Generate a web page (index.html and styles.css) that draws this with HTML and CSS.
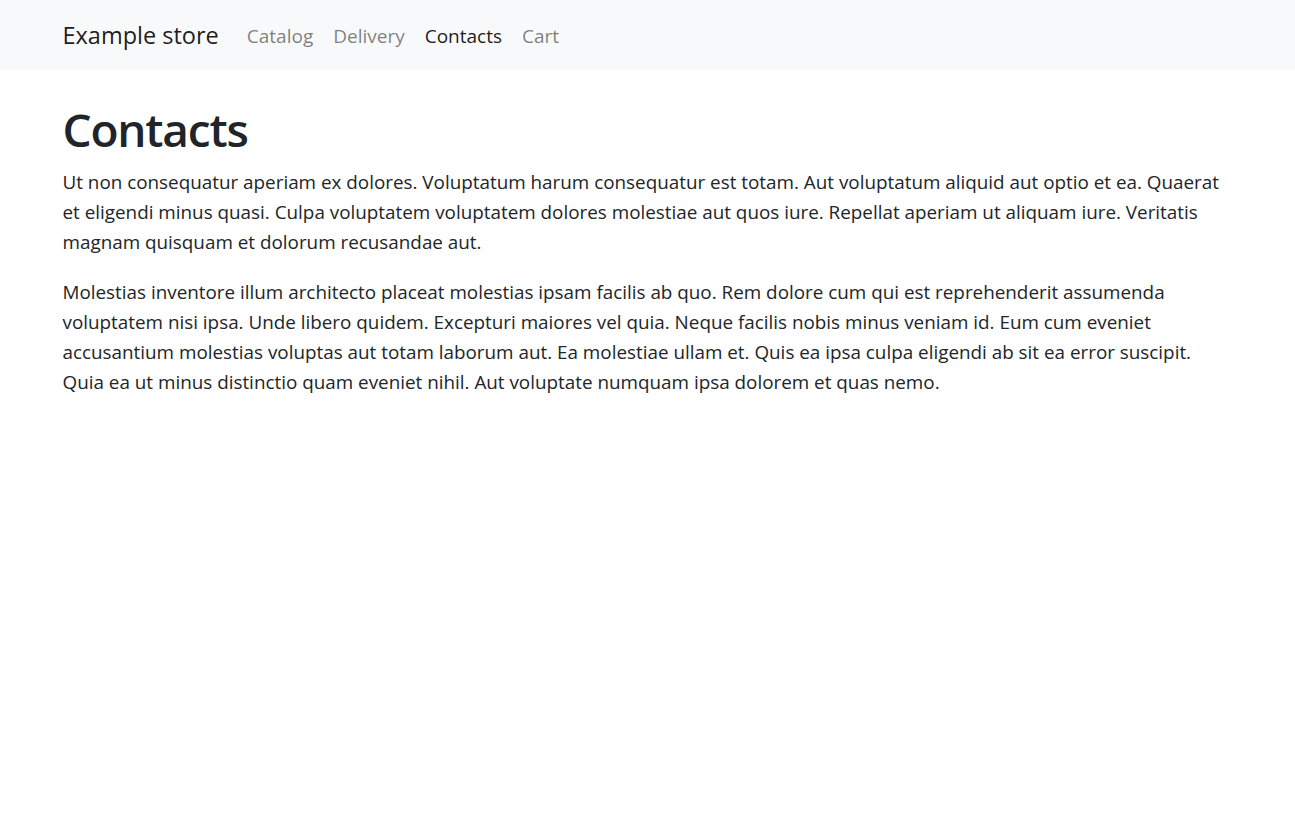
FILE: index.html
```html
<!DOCTYPE html>
<html lang="en">
<head>
<meta charset="utf-8">
<title>Contacts</title>
<link rel="stylesheet" href="styles.css">
</head>
<body>
<nav class="navbar">
  <div class="container nav-inner">
    <a class="brand" href="#">Example store</a>
    <ul class="nav">
      <li><a class="nav-link" href="#">Catalog</a></li>
      <li><a class="nav-link" href="#">Delivery</a></li>
      <li><a class="nav-link active" href="#">Contacts</a></li>
      <li><a class="nav-link" href="#">Cart</a></li>
    </ul>
  </div>
</nav>
<main class="container content">
  <h1 class="title">Contacts</h1>
  <p>Ut non consequatur aperiam ex dolores. Voluptatum harum consequatur est totam. Aut voluptatum aliquid aut optio et ea. Quaerat et eligendi minus quasi. Culpa voluptatem voluptatem dolores molestiae aut quos iure. Repellat aperiam ut aliquam iure. Veritatis magnam quisquam et dolorum recusandae aut.</p>
  <p>Molestias inventore illum architecto placeat molestias ipsam facilis ab quo. Rem dolore cum qui est reprehenderit assumenda voluptatem nisi ipsa. Unde libero quidem. Excepturi maiores vel quia. Neque facilis nobis minus veniam id. Eum cum eveniet accusantium molestias voluptas aut totam laborum aut. Ea molestiae ullam et. Quis ea ipsa culpa eligendi ab sit ea error suscipit. Quia ea ut minus distinctio quam eveniet nihil. Aut voluptate numquam ipsa dolorem et quas nemo.</p>
</main>
</body>
</html>
```
FILE: styles.css
```css
html { font-size: 20px; }
* { box-sizing: border-box; }
body {
  margin: 0;
  font-family: "Open Sans", "Noto Sans", sans-serif;
  font-size: 18.85px;
  line-height: 30px;
  color: #212529;
  background: #fff;
}
.container {
  width: 100%;
  max-width: 1200px;
  margin: 0 auto;
  padding: 0 15px;
}
.navbar {
  background: #f8f9fa;
  padding: 10px 0;
}
.nav-inner {
  display: flex;
  align-items: center;
}
.brand {
  font-size: 23.5px;
  line-height: 37px;
  padding: 6px 0 5px;
  margin-right: 18px;
  color: rgba(0,0,0,.9);
  text-decoration: none;
  white-space: nowrap;
}
.nav {
  display: flex;
  list-style: none;
  margin: 0;
  padding: 0;
}
.nav-link {
  display: block;
  padding: 11px 10px 9px;
  line-height: 30px;
  font-size: 19px;
  color: rgba(0,0,0,.5);
  text-decoration: none;
}
.nav-link.active { color: rgba(0,0,0,.9); }
.content { padding-top: 27px; }
.title {
  font-size: 46px;
  font-weight: 600;
  letter-spacing: -1.2px;
  line-height: 60px;
  margin: 0 0 10px;
  padding-top: 2px;
  height: 60px;
}
p { margin: 0 0 20px; }
```
